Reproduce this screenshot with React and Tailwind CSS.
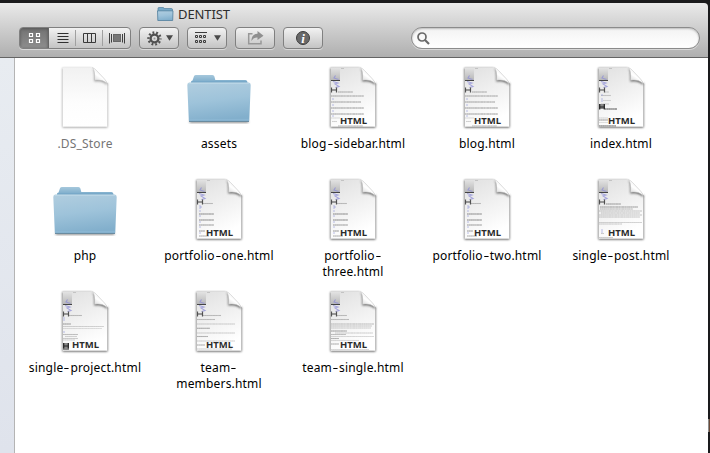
import React from "react";

const FONT = "font-['Noto_Sans','Open_Sans',sans-serif]";

// Thumbnail text rows: [x, y, width, opacity]
const PREVIEWS = {
  blog: {
    rows: [[17, 26, 15, 0.5], [10, 30, 33, 0.55], [10, 36, 30, 0.55], [10, 42, 33, 0.6], [10, 48, 33, 0.6], [10, 52, 9, 0.2], [11, 55.5, 5, 0.35], [17, 60, 25, 0.45]],
    blue: [[11, 33], [11, 39], [11, 45], [11, 50]],
  },
  index: {
    rows: [[16, 26, 4, 0.3], [12, 29.5, 10, 0.4], [14, 34.5, 8, 0.3], [12, 38, 8, 0.3], [16, 43, 12, 1.3], [10, 52, 9, 0.25], [10, 54, 9, 0.6], [10, 56.5, 9, 0.25], [10, 60, 17, 1]],
    blue: [[12, 29], [12, 33], [12, 35]],
    block: [10, 38, 5],
  },
  portfolio: {
    rows: [[16, 25.5, 10, 0.5], [12, 36, 15, 0.7], [12, 42, 15, 0.7], [12, 47, 15, 0.6], [12, 53, 6, 0.6], [12, 58, 10, 0.5]],
    blue: [[12, 28], [13, 29], [12, 30], [12, 33], [12, 38], [12, 44], [12, 49], [12, 55]],
  },
  post: {
    rows: [[17, 26, 15, 0.6], [11, 29, 38, 0.6], [11, 31, 33, 0.4], [10, 33, 43, 0.35], [12, 35, 39, 0.35], [10, 37, 43, 0.35], [10, 39, 41, 0.35], [10, 44.5, 43, 0.35], [10, 46, 23, 0.3], [12, 55.5, 3, 0.4], [10, 59.5, 14, 0.4]],
    blue: [[12, 52], [12, 54]],
  },
  project: {
    rows: [[16, 25.5, 13, 0.5], [10, 34, 8, 0.6], [10, 36.5, 41, 0.35], [10, 38.5, 39, 0.25], [10, 44.5, 15, 0.5], [12, 46.5, 12, 0.35], [10, 48.5, 15, 0.4], [10, 50, 12, 0.25]],
    blue: [[10, 28], [10, 30], [10, 42]],
    block: [10, 53, 7],
  },
  members: {
    rows: [[16, 25.5, 18, 0.5], [10, 29.5, 18, 0.5], [10, 34, 38, 0.3], [10, 38.3, 13, 0.6], [10, 43, 38, 0.3], [10, 46.5, 11, 0.6], [10, 51, 38, 0.3], [10, 55, 8, 0.5], [10, 59, 35, 0.3]],
    blue: [],
  },
  single: {
    rows: [[16, 25.5, 10, 0.5], [10, 29.5, 18, 0.5], [10, 34, 43, 0.4], [10, 36, 41, 0.35], [10, 38, 40, 0.3], [10, 41, 16, 0.6], [14, 43, 38, 0.3], [10, 44.5, 15, 0.5], [10, 46.5, 43, 0.3], [10, 48.5, 8, 0.6], [10, 50.5, 28, 0.3], [10, 54, 8, 0.5], [10, 59.5, 38, 0.3]],
    blue: [],
  },
};

const FILES = [
  { name: ".DS_Store", kind: "blank", label: "text-[#757575]" },
  { name: "assets", kind: "folder" },
  { name: "blog-sidebar.html", kind: "blog" },
  { name: "blog.html", kind: "blog" },
  { name: "index.html", kind: "index" },
  { name: "php", kind: "folder" },
  { name: "portfolio-one.html", kind: "portfolio" },
  { name: "portfolio-\nthree.html", kind: "portfolio" },
  { name: "portfolio-two.html", kind: "portfolio" },
  { name: "single-post.html", kind: "post" },
  { name: "single-project.html", kind: "project" },
  { name: "team-\nmembers.html", kind: "members" },
  { name: "team-single.html", kind: "single" },
];

function Defs() {
  return (
    <svg className="absolute size-0" aria-hidden="true">
      <defs>
        <linearGradient id="page" x1="0" y1="0" x2="0.35" y2="1">
          <stop offset="0" stopColor="#e0e0e0" />
          <stop offset="0.55" stopColor="#f1f1f1" />
          <stop offset="1" stopColor="#fff" />
        </linearGradient>
        <linearGradient id="blankPage" x1="0" y1="0" x2="0" y2="1">
          <stop offset="0" stopColor="#f1f1f1" />
          <stop offset="0.6" stopColor="#fdfdfd" />
          <stop offset="1" stopColor="#fff" />
        </linearGradient>
        <linearGradient id="thumb" x1="0" y1="0" x2="0" y2="1">
          <stop offset="0" stopColor="#e2e2e2" />
          <stop offset="1" stopColor="#b8b8b8" />
        </linearGradient>
        <linearGradient id="curl" x1="0.3" y1="0.8" x2="0.6" y2="0.3">
          <stop offset="0" stopColor="#e4e4e4" />
          <stop offset="0.5" stopColor="#fff" />
          <stop offset="1" stopColor="#f4f4f4" />
        </linearGradient>
        <linearGradient id="folderBack" x1="0" y1="0" x2="0" y2="1">
          <stop offset="0" stopColor="#a6c8dc" />
          <stop offset="0.6" stopColor="#82b0cd" />
        </linearGradient>
        <linearGradient id="folderFront" x1="0.1" y1="0" x2="0.3" y2="1">
          <stop offset="0" stopColor="#b0cddf" />
          <stop offset="0.5" stopColor="#9ec3da" />
          <stop offset="1" stopColor="#82afcc" />
        </linearGradient>
        <filter id="soft" x="-20%" y="-20%" width="140%" height="140%">
          <feGaussianBlur stdDeviation="0.9" />
        </filter>
        <clipPath id="pageClip">
          <path d="M9.7 1.3H38.5L54.3 17V60.7H9.7Z" />
        </clipPath>
      </defs>
    </svg>
  );
}

function FolderIcon() {
  return (
    <svg viewBox="0 0 64 64" className="size-16">
      <rect x="2.5" y="54.5" width="59" height="2.6" rx="1" fill="#555" opacity="0.65" filter="url(#soft)" />
      <path d="M4 19V15.500Q4 14.800 5.500 14.500L7 10.2Q7.5 9 9 9H25.500Q27 9 27.400 10.500L28.300 14H58.500Q60 14 60.300 15.500L61 19Z" fill="url(#folderBack)" />
      <path d="M5 15.600H60" stroke="#73a6c6" strokeWidth="0.8" />
      <path d="M0.300 19Q0.200 16.500 2.500 16.500H61.500Q63.800 16.500 63.700 19L62.300 54.200Q62.200 55.700 60.800 55.700H3.200Q1.900 55.700 1.800 54.200Z" fill="url(#folderFront)" />
      <path d="M1.500 17.300H62.500" stroke="#c1dbe9" strokeWidth="0.8" />
      <path d="M2 53.800H62" stroke="#91bdd8" strokeWidth="0.7" />
      <path d="M2 55.500H62" stroke="#66879b" strokeWidth="0.9" />
    </svg>
  );
}

function FileIcon({ kind }) {
  const blank = kind === "blank";
  const p = PREVIEWS[kind];
  return (
    <svg viewBox="0 0 64 64" className="size-16 overflow-visible">
      <path d="M9.500 2H38.500L54.500 17.500V61.500H9.500Z" fill="#000" opacity={blank ? 0.4 : 0.7} filter="url(#soft)" />
      <path d="M10.500 1.300H38.500Q41 1.500 43 3.500L52.500 13.500Q54.300 15.500 54.300 18V60.700H9.700V2.200Z" fill={blank ? "url(#blankPage)" : "url(#page)"} />
      {p && (
        <g clipPath="url(#pageClip)">
          <rect x="10" y="2" width="9" height="12" fill="url(#thumb)" />
          <rect x="10" y="14" width="9" height="1" fill="#444" />
          <rect x="20" y="2" width="3" height="0.8" fill="#bbb" />
          <path d="M14.500 9.500L13 12L17.500 13.500M12 15.500L17 17L14 18L18 20.500L14.500 21.500" fill="none" stroke="#8e8dd8" strokeWidth="1.100" opacity="0.75" />
          <path d="M10.500 21.500V26.500M15.500 21.500V26.500" stroke="#555" strokeWidth="1.200" />
          <path d="M10.500 24H15.500" stroke="#444" strokeWidth="1.200" />
          {p.rows.map(([x, y, w, o], i) => (
            <g key={i} opacity={Math.min(1, o * 0.9)}>
              <path d={`M${x} ${y}h${w}`} stroke="#999" strokeWidth="1.100" />
              <path d={`M${x} ${y}h${w}`} stroke="#707070" strokeWidth="0.900" strokeDasharray="1.500 0.500 1 0.400 2.300 0.500" />
            </g>
          ))}
          {p.blue.map(([x, y], i) => (
            <path key={i} d={`M${x} ${y}h2`} stroke="#8b91d8" strokeWidth="0.900" opacity="0.65" />
          ))}
          {p.block && (
            <g transform={`translate(${p.block[0]} ${p.block[1]})`}>
              <rect width="6" height={p.block[2]} fill="#888" />
              <path d="M0.700 0V5.500M5.300 0V5.500M0.700 3H5.300" stroke="#222" strokeWidth="1.200" />
            </g>
          )}
        </g>
      )}
      <path d="M39.500 2Q42 5 41.300 15.500Q49 14 54.300 19V17Z" fill="#333" opacity={blank ? 0.45 : 0.75} filter="url(#soft)" />
      <path d="M38.500 1L55.500 17.800V0.500Z" fill="#fff" />
      <path d="M39.500 1.500Q42.300 5 41.500 14.200Q49.500 13.300 54.200 17.500Q53.500 15.200 51.500 13L43.500 4.500Q41.500 2.300 39.500 1.500Z" fill="url(#curl)" stroke="#bbb" strokeWidth="0.500" />
      {p && (
        <text x="19" y="58" textLength="27" lengthAdjust="spacingAndGlyphs" fontSize="9.200" fontWeight="700" fill="#2b2b2b" fontFamily="'Noto Sans','Open Sans',sans-serif">
          HTML
        </text>
      )}
    </svg>
  );
}

// File names are set with a long hyphen, stretched from the font's own glyph.
function FileName({ name }) {
  return name.split("-").map((part, i) => (
    <React.Fragment key={i}>
      {i > 0 && <span className="inline-block w-[7px] origin-center scale-x-150 text-center tracking-normal">-</span>}
      {part}
    </React.Fragment>
  ));
}

function FileCell({ name, kind, label = "text-black" }) {
  return (
    <div className="flex h-28 w-[134px] flex-col items-center">
      {kind === "folder" ? <FolderIcon /> : <FileIcon kind={kind} />}
      <div className={`mt-1.5 whitespace-pre text-center text-[12px] leading-4 tracking-[0.18px] ${label}`}>
        <FileName name={name} />
      </div>
    </div>
  );
}

const BUTTON =
  "flex h-[22px] items-center rounded-[4px] border border-[#808080] bg-linear-to-b from-[#f2f2f2] to-[#c4c4c4] shadow-[0_1px_0_#d8d8d8]";

function ViewSwitcher() {
  return (
    <div className={`${BUTTON} w-[112px] overflow-hidden`}>
      <div className="flex h-full w-[29px] items-center justify-center border-r border-[#666] bg-linear-to-b from-[#737373] to-[#8d8d8d] shadow-[inset_0_1px_3px_#555]">
        <svg width="13" height="12" viewBox="0 0 13 12" fill="none" stroke="#fff" strokeWidth="1.200">
          <path d="M1.500 1.500h3v3h-3zM8.500 1.500h3v3h-3zM1.500 7.500h3v3h-3zM8.500 7.500h3v3h-3z" />
        </svg>
      </div>
      <div className="flex h-4 w-[27px] items-center justify-center border-r border-[#a0a0a0] pl-0.5">
        <svg width="12" height="11" viewBox="0 0 12 11" stroke="#303030">
          <path d="M0.500 0.500h11M0.500 3.500h11M0.500 6.500h11M0.500 9.500h11" />
        </svg>
      </div>
      <div className="flex h-4 w-[27px] items-center justify-center border-r border-[#a0a0a0] pl-0.5">
        <svg width="14" height="11" viewBox="0 0 14 11" fill="none" stroke="#3a3a3a">
          <path d="M0.500 0.500h12v9h-12zM4.500 0.500v9M8.500 0.500v9" />
        </svg>
      </div>
      <div className="flex h-4 w-[27px] items-center justify-center">
        <svg width="16" height="11" viewBox="0 0 16 11" stroke="#3f3f3f">
          <rect x="4.500" y="1.500" width="7" height="7" fill="#777" stroke="#666" />
          <path d="M0.500 0v10.500M2.500 1v8.500M13.500 1v8.500M15.500 0v10.500" />
        </svg>
      </div>
    </div>
  );
}

function Caret() {
  return (
    <svg width="7" height="6" viewBox="0 0 7 6">
      <path d="M0 0.200h7L3.500 5.800z" fill="#4a4a4a" />
    </svg>
  );
}

function GearIcon() {
  return (
    <svg width="15" height="15" viewBox="0 0 15 15">
      <circle cx="7.500" cy="7.500" r="6" fill="none" stroke="#505050" strokeWidth="2.400" strokeDasharray="1.800 1.970" strokeDashoffset="0.900" />
      <circle cx="7.500" cy="7.500" r="3.900" fill="none" stroke="#505050" strokeWidth="2.400" />
      <circle cx="7.500" cy="7.500" r="1" fill="#999" />
    </svg>
  );
}

function Toolbar() {
  return (
    <header className="flex h-[55px] w-[708px] flex-col rounded-tr-[4px] border-b border-[#646464] bg-linear-to-b from-[#eaeaea] to-[#afafaf]">
      <div className="flex h-6 items-start gap-1 pl-[157px]">
        <svg className="mt-1" width="17" height="15" viewBox="0 0 17 15">
          <path d="M1 4V1.300Q1 0.500 2 0.500H6Q7 0.500 7.200 1.500H14.500Q15.500 1.500 15.500 3V5H1Z" fill="#78a9c8" stroke="#527f9d" strokeWidth="0.700" />
          <path d="M0.500 3.800H16L15.700 13.500H0.800Z" fill="url(#folderFront)" stroke="#527f9d" strokeWidth="0.800" />
        </svg>
        <span className="text-[13px] leading-[22px] tracking-[-0.1px] text-[#2d2d2d]">DENTIST</span>
      </div>
      <div className="flex h-[22px] items-center pl-[19px]">
        <ViewSwitcher />
        <div className={`${BUTTON} ml-2 w-10 justify-center gap-1 pl-0.5`}>
          <GearIcon />
          <Caret />
        </div>
        <div className={`${BUTTON} ml-2 w-10 justify-center gap-[7px] pl-0.5`}>
          <svg width="12" height="12" viewBox="0 0 12 12" fill="none" stroke="#3c3c3c">
            <path d="M0 0.500h12" />
            <path d="M0.500 3.500h2v2h-2zM4.500 3.500h2v2h-2zM8.500 3.500h2v2h-2zM0.500 8.500h2v2h-2zM4.500 8.500h2v2h-2zM8.500 8.500h2v2h-2z" />
          </svg>
          <Caret />
        </div>
        <div className={`${BUTTON} ml-2 w-10 justify-center`}>
          <svg width="17" height="14" viewBox="0 0 17 14">
            <path d="M5.500 2.800H1.700V12.700H14V9.500" fill="none" stroke="#989898" strokeWidth="1.500" />
            <path d="M10.500 0L16.500 4.700L10.500 9V6.500Q7 6.200 4.300 10Q4.500 3 10.500 2.700Z" fill="#8f8f8f" />
          </svg>
        </div>
        <div className={`${BUTTON} ml-2 w-10 justify-center`}>
          <div className="flex size-[14px] items-center justify-center rounded-full border border-[#3c3c3c] bg-[#686868] font-['Liberation_Serif',serif] text-[13px] font-bold italic leading-none text-white">
            i
          </div>
        </div>
        <div className="ml-[88px] flex h-[22px] w-[289px] items-center rounded-full border border-[#8b8b8b] bg-linear-to-b from-[#f3f3f3] to-white pl-[5px] shadow-[0_1px_0_#d8d8d8,inset_0_1px_2px_#bbb]">
          <svg width="13" height="13" viewBox="0 0 13 13" fill="none" stroke="#696969">
            <circle cx="5" cy="5" r="4" strokeWidth="1.700" />
            <path d="M8 8l4 4" strokeWidth="2.200" />
          </svg>
        </div>
      </div>
    </header>
  );
}

export default function App() {
  return (
    <div className={`flex h-[453px] w-[710px] flex-col overflow-hidden bg-[#1a1a1c] pt-[3px] ${FONT}`}>
      <Defs />
      <Toolbar />
      <main className="flex min-h-0 flex-1">
        <aside className="w-[15px] shrink-0 border-r border-[#b4b4b4] bg-linear-to-b from-[#e8ecf1] to-[#dfe3ec]" />
        <section className="grid w-[693px] shrink-0 auto-rows-[112px] grid-cols-[repeat(5,134px)] content-start bg-white pl-[3px] pt-2">
          {FILES.map((file) => (
            <FileCell key={file.name} {...file} />
          ))}
        </section>
        <div className="mt-[361px] h-[13px] w-0.5 border-l border-[#8c8c8c] bg-[#6b4a38]" />
      </main>
    </div>
  );
}
